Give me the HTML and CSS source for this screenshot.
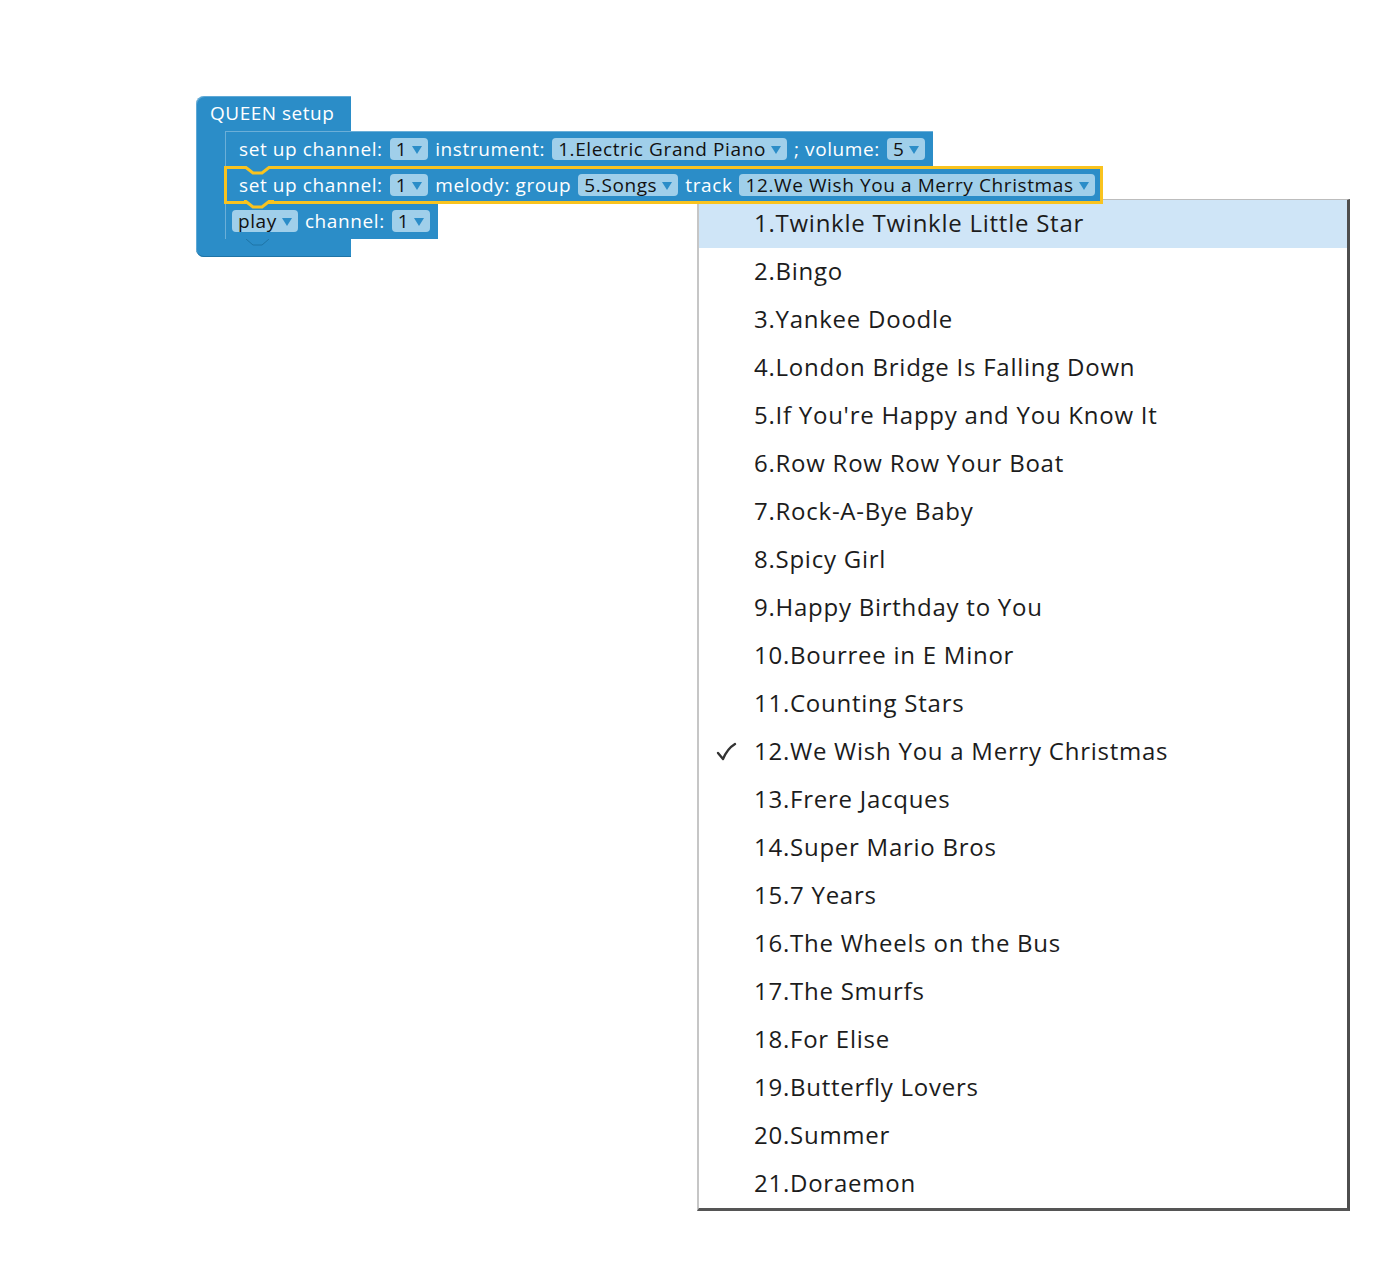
FILE: index.html
```html
<!DOCTYPE html>
<html>
<head>
<meta charset="utf-8">
<link rel="stylesheet" href="styles.css">
</head>
<body>
<div class="workspace">
  <div class="cblock">
    <div class="ctitle">QUEEN setup</div>
    <div class="stack">
      <div class="stmt s1">
        <span class="lbl">set up channel:</span>
        <span class="field">1<i class="arr"></i></span>
        <span class="lbl">instrument:</span>
        <span class="field">1.Electric Grand Piano<i class="arr"></i></span>
        <span class="lbl">; volume:</span>
        <span class="field">5<i class="arr"></i></span>
      </div>
      <div class="stmt s2">
        <span class="lbl">set up channel:</span>
        <span class="field">1<i class="arr"></i></span>
        <span class="lbl">melody: group</span>
        <span class="field">5.Songs<i class="arr"></i></span>
        <span class="lbl">track</span>
        <span class="field">12.We Wish You a Merry Christmas<i class="arr"></i></span>
        <svg class="notch-top" width="30" height="10" viewBox="0 0 30 10"><path d="M0 0 V1.5 H2 L9 7 H18 L25 1.5 H30 V0 Z" fill="#2b8dc8"/><path d="M0 1.5 H2 L9 7 H18 L25 1.5 H30" fill="none" stroke="#f9c31f" stroke-width="3"/></svg>
        <svg class="notch-bot" width="30" height="10" viewBox="0 0 30 10"><path d="M0 0 V1.5 H2 L9 7 H18 L25 1.5 H30 V0 Z" fill="#2b8dc8"/><path d="M0 1.5 H2 L9 7 H18 L25 1.5 H30" fill="none" stroke="#f9c31f" stroke-width="3"/></svg>
      </div>
      <div class="stmt s3">
        <span class="field">play<i class="arr"></i></span>
        <span class="lbl">channel:</span>
        <span class="field">1<i class="arr"></i></span>
        <svg class="tab-bot" width="30" height="8" viewBox="0 0 30 8"><path d="M2 0 L9 6 H18 L25 0 Z" fill="#2b8dc8"/><path d="M2 0 L9 6 H18 L25 0" fill="none" stroke="#1f74a6" stroke-width="1"/></svg>
      </div>
    </div>
  </div>
</div>
<div class="menu">
  <div class="item hl">1.Twinkle Twinkle Little Star</div>
  <div class="item">2.Bingo</div>
  <div class="item">3.Yankee Doodle</div>
  <div class="item">4.London Bridge Is Falling Down</div>
  <div class="item">5.If You're Happy and You Know It</div>
  <div class="item">6.Row Row Row Your Boat</div>
  <div class="item">7.Rock-A-Bye Baby</div>
  <div class="item">8.Spicy Girl</div>
  <div class="item">9.Happy Birthday to You</div>
  <div class="item">10.Bourree in E Minor</div>
  <div class="item">11.Counting Stars</div>
  <div class="item checked"><svg class="check" width="22" height="22" viewBox="0 0 22 22"><path d="M3 12 L8 18 C11 11 15 6 20 3" fill="none" stroke="#333" stroke-width="2.4" stroke-linecap="round" stroke-linejoin="round"/></svg>12.We Wish You a Merry Christmas</div>
  <div class="item">13.Frere Jacques</div>
  <div class="item">14.Super Mario Bros</div>
  <div class="item">15.7 Years</div>
  <div class="item">16.The Wheels on the Bus</div>
  <div class="item">17.The Smurfs</div>
  <div class="item">18.For Elise</div>
  <div class="item">19.Butterfly Lovers</div>
  <div class="item">20.Summer</div>
  <div class="item">21.Doraemon</div>
</div>
</body>
</html>
```

FILE: styles.css
```css
html, body {
  margin: 0;
  padding: 0;
  background: #ffffff;
}
body {
  font-family: "Open Sans", "Liberation Sans", sans-serif;
  position: relative;
  width: 1392px;
  height: 1280px;
  overflow: hidden;
}
.workspace {
  padding: 96px 0 0 196px;
}
.cblock {
  width: 155px;
  background: #2b8dc8;
  border-radius: 8px 0 0 8px;
  padding-bottom: 18px;
  box-shadow: inset 1px 1px 0 rgba(255,255,255,0.25), inset 0 -1px 0 #1f74a6;
}
.ctitle {
  height: 35px;
  line-height: 35px;
  padding-left: 14px;
  color: #fff;
  font-size: 19px;
  letter-spacing: 0.5px;
  white-space: nowrap;
}
.stack {
  margin-left: 29px;
  width: max-content;
  display: flex;
  flex-direction: column;
}
.stmt {
  position: relative;
  display: flex;
  align-items: center;
  gap: 7px;
  height: 36px;
  padding: 0 8px 0 14px;
  background: #2b8dc8;
  width: max-content;
  box-shadow: inset 1px 1px 0 rgba(255,255,255,0.3);
}
.s2 {
  outline: 3px solid #f9c31f;
  outline-offset: -2px;
  padding-right: 7px;
  z-index: 2;
}
.s3 {
  padding-left: 7px;
}
.lbl {
  color: #fff;
  font-size: 19px;
  letter-spacing: 0.6px;
  white-space: nowrap;
}
.field {
  display: flex;
  align-items: center;
  gap: 5px;
  height: 22px;
  padding: 0 6px 0 6px;
  border-radius: 4px;
  background: #a0cfea;
  color: #111;
  font-size: 19px;
  letter-spacing: 0.6px;
  white-space: nowrap;
}
.arr {
  display: block;
  width: 0;
  height: 0;
  border-left: 5px solid transparent;
  border-right: 5px solid transparent;
  border-top: 8px solid #2b8dc8;
  margin-top: 2px;
}
.notch-top {
  position: absolute;
  left: 19px;
  top: -1px;
}
.notch-bot {
  position: absolute;
  left: 19px;
  top: 33px;
}
.tab-bot {
  position: absolute;
  left: 19px;
  top: 36px;
}
.menu {
  position: absolute;
  left: 697px;
  top: 199px;
  width: 648px;
  border-top: 1px solid #bdbdbd;
  border-left: 2px solid #c6c6c6;
  border-right: 3px solid #4e4e4e;
  border-bottom: 3px solid #555555;
  background: #fff;
  padding: 0;
}
.item {
  position: relative;
  height: 48px;
  line-height: 46px;
  padding-left: 55px;
  font-size: 24px;
  letter-spacing: 0.75px;
  color: #1c1c1c;
  white-space: nowrap;
}
.item.hl {
  background: #cfe5f7;
}
.check {
  position: absolute;
  left: 16px;
  top: 13px;
}
```
